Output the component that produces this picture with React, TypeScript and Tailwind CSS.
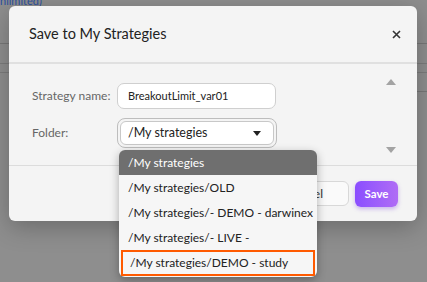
const font = { fontFamily: "Lato, 'Noto Sans', sans-serif" };

const folders = [
  "/My strategies/OLD",
  "/My strategies/- DEMO - darwinex",
  "/My strategies/- LIVE -",
];

function Caret() {
  return (
    <svg width="8" height="5" viewBox="0 0 8 5" className="text-[#222]">
      <path d="M0 0h8L4 5z" fill="currentColor" />
    </svg>
  );
}

export default function App() {
  return (
    <div
      className="relative h-[282px] w-[427px] overflow-hidden bg-[#8e8e8e]"
      style={font}
    >
      {/* page behind the overlay */}
      <div className="absolute left-0 top-[-7px] text-[11px] text-[#2a4fa0]">nlimited)</div>
      <div className="absolute left-0 right-0 top-[43px] h-px bg-[#777]" />
      <div className="absolute left-0 right-0 top-[63px] h-px bg-[#7c7c7c]" />
      <div className="absolute left-0 right-0 top-[72px] h-px bg-[#7c7c7c]" />
      <div className="absolute left-[400px] right-0 top-[91px] h-px bg-[#777]" />

      {/* modal */}
      <div className="absolute left-[9px] top-[6px] flex w-[408px] flex-col rounded-[6px] bg-[#f4f4f4] shadow-[0_6px_24px_rgba(0,0,0,0.25)]">
        <div className="flex h-[58px] items-center justify-between border-b-2 border-[#e0e0e0] pl-[20px] pr-[16px]">
          <span className="text-[14.5px] text-[#222]">Save to My Strategies</span>
          <svg width="9" height="9" viewBox="0 0 9 9">
            <path d="M1 1l7 7M8 1L1 8" stroke="#333" strokeWidth="1.6" />
          </svg>
        </div>

        <div className="relative flex h-[101px] flex-col gap-[9px] pl-[23px] pt-[19px]">
          <div className="flex items-center">
            <span className="w-[85px] whitespace-nowrap text-[12px] text-[#666]">Strategy name:</span>
            <div className="flex h-[26px] w-[159px] items-center rounded-[7px] border border-[#cfcfcf] bg-white px-[10px] text-[11px] text-[#222]">
              BreakoutLimit_var01
            </div>
          </div>
          <div className="flex items-center">
            <span className="w-[85px] whitespace-nowrap text-[12px] text-[#666]">Folder:</span>
            <div className="relative rounded-[8px] border border-[#bdbdbd] p-[2px]">
              <div className="flex h-[24px] w-[154px] items-center justify-between rounded-[6px] border border-[#c8c8c8] bg-white pl-[7px] pr-[12px] text-[12.5px] text-[#222]">
                /My strategies
                <Caret />
              </div>

              {/* open dropdown */}
              <div className="absolute left-[1px] top-[31px] z-10 w-[198px] overflow-hidden rounded-[6px] bg-[#f6f6f6] shadow-[0_3px_10px_rgba(0,0,0,0.3)]">
                <div className="flex h-[25px] items-center bg-[#6f6f6f] pl-[9px] text-[12px] text-white">
                  /My strategies
                </div>
                {folders.map((f) => (
                  <div key={f} className="flex h-[25px] items-center whitespace-nowrap pl-[9px] text-[12px] text-[#222]">
                    {f}
                  </div>
                ))}
                <div className="mx-[2px] mb-[1px] flex h-[26px] items-center whitespace-nowrap border-2 border-[#ff5a00] pl-[7px] text-[12px] text-[#222]">
                  /My strategies/DEMO - study
                </div>
              </div>
            </div>
          </div>

          {/* scrollbar arrows */}
          <div className="absolute right-[21px] top-[15px] flex h-[74px] flex-col justify-between">
            <svg width="10" height="6" viewBox="0 0 10 6"><path d="M0 6L5 0l5 6z" fill="#a3a3a3" /></svg>
            <svg width="10" height="6" viewBox="0 0 10 6"><path d="M0 0h10L5 6z" fill="#a3a3a3" /></svg>
          </div>
        </div>

        <div className="flex h-[56px] items-center justify-end gap-[6px] border-t border-[#dcdcdc] pr-[19px]">
          <button className="h-[25px] rounded-[6px] border border-[#d8d8d8] bg-[#fafafa] pl-[20px] pr-[25px] text-[12px] text-[#333]">
            Cancel
          </button>
          <button className="h-[26px] w-[43px] rounded-[6px] bg-gradient-to-r from-[#8b4dff] to-[#b06cf5] text-[11.5px] font-bold text-white shadow-[0_2px_4px_rgba(120,60,220,0.35)]">
            Save
          </button>
        </div>
      </div>
    </div>
  );
}
